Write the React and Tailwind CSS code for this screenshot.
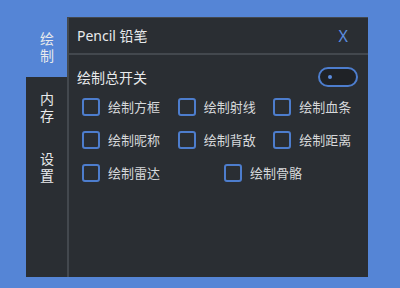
const rows = [
  ["绘制方框", "绘制射线", "绘制血条"],
  ["绘制昵称", "绘制背敌", "绘制距离"],
];

function Check({ label }) {
  return (
    <div className="flex items-center gap-[8px] pl-[8px]">
      <div className="h-[18px] w-[18px] rounded-[3px] border-2 border-[#4d7dcd]" />
      <span className="text-[13px] leading-[18px] text-[#d6d8da]">{label}</span>
    </div>
  );
}

function Tab({ label }) {
  return (
    <div className="flex h-[60px] items-center justify-center pl-[1px]">
      <p className="w-[14px] break-all leading-[17px]">{label}</p>
    </div>
  );
}

export default function App() {
  return (
    <div
      className="flex h-[288px] w-[400px] bg-[#5585d6] pl-[26px] pt-[17px]"
      style={{ fontFamily: '"Noto Sans", "Noto Sans CJK SC", sans-serif' }}
    >
      <div className="flex h-[260px] w-[41px] flex-col text-[14px] text-[#e8eaec]">
        <Tab label="绘制" />
        <div className="flex flex-1 flex-col bg-[#2a2e33]">
          <Tab label="内存" />
          <Tab label="设置" />
        </div>
      </div>

      <div className="flex h-[260px] w-[301px] flex-col border-l-2 border-t border-[#43484e] bg-[#2a2e33]">
        <div className="flex h-[37px] items-center justify-between border-b-2 border-[#43484e] pl-[8px] pr-[20px]">
          <span className="text-[14px] text-[#e8eaec]">Pencil 铅笔</span>
          <span className="text-[16px] text-[#5b8de0]">X</span>
        </div>

        <div className="flex flex-col pl-[5px] pr-[7px]">
          <div className="mt-[12px] flex h-[20px] items-center justify-between pl-[3px] pr-[3px]">
            <span className="text-[14px] text-[#e8eaec]">绘制总开关</span>
            <div className="flex h-[20px] w-[40px] items-center rounded-full border-2 border-[#4d7dcd] bg-[#1f2226] pl-[8px]">
              <div className="h-[4px] w-[4px] rounded-full bg-[#5b8de0]" />
            </div>
          </div>

          <div className="mt-[11px] flex flex-col gap-[15px]">
            {rows.map((r, i) => (
              <div key={i} className="grid grid-cols-3">
                {r.map((l) => (
                  <Check key={l} label={l} />
                ))}
              </div>
            ))}
            <div className="grid grid-cols-[142px_1fr]">
              <Check label="绘制雷达" />
              <Check label="绘制骨骼" />
            </div>
          </div>
        </div>
      </div>
    </div>
  );
}
